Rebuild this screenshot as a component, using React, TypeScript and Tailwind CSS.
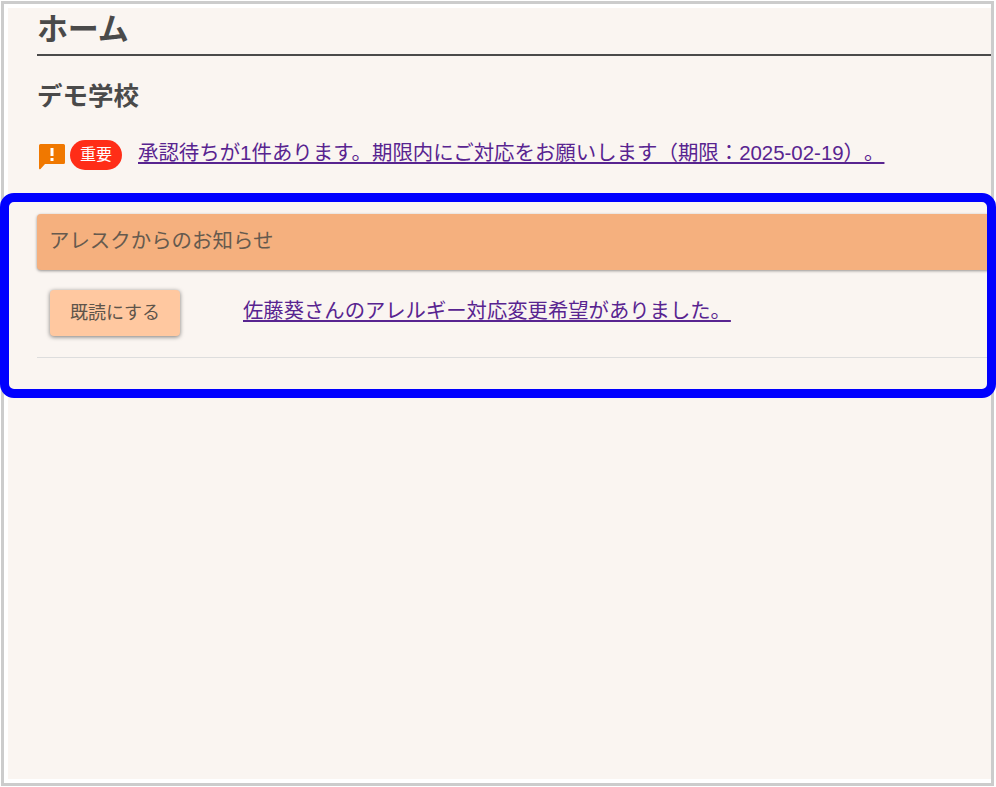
const font = "font-['Liberation_Sans','Noto_Sans_CJK_JP',sans-serif]";

export default function App() {
  return (
    <div className={`${font} relative w-[996px] h-[787px] bg-white overflow-hidden [text-spacing-trim:space-all]`}>
      {/* Frame */}
      <div className="ml-px mt-px w-[993px] h-[785px] border-[3px] border-[#cccccc] bg-white pl-[4px] pt-[4px] pb-[4px]">
        <main className="h-full bg-[#faf5f1] pl-[29px] text-[#4a4a4a]">
          <h1 className="h-[48px] border-b-2 border-[#4a4a4a] text-[31px] leading-[44px] font-bold -tracking-[0.2px]">ホーム</h1>
          <h2 className="mt-[24px] text-[25.500px] leading-[32px] font-bold">デモ学校</h2>

          {/* Alert */}
          <div className="mt-[28px] flex items-start">
            <svg className="ml-[2px] mt-[4px] w-[26px] h-[26px]" viewBox="0 0 26 26">
              <path d="M1.500 0H24.500Q26 0 26 1.500V18.500Q26 20 24.500 20H6L1.500 25Q0 26 0 24V1.500Q0 0 1.500 0Z" fill="#f07800" />
              <rect x="11.500" y="4" width="3" height="8" fill="#ffffff" />
              <rect x="11.500" y="14" width="3" height="3" fill="#ffffff" />
            </svg>
            <span className="ml-[5px] w-[52px] h-[30px] rounded-full bg-[#ff2d17] text-white text-[16px] leading-[29px] text-center">重要</span>
            <a href="#" className="ml-[16px] text-[20.430px] leading-[26px] text-[#582490] underline">
              承認待ちが1件あります。期限内にご対応をお願いします（期限：2025-02-19）。
            </a>
          </div>

          {/* Notices */}
          <section className="mt-[44px]">
            <div className="h-[56px] rounded-[4px] bg-[#f5b07e] pl-[12px] text-[20.450px] leading-[54px] text-[#665a4e] shadow-[0_1px_3px_rgba(0,0,0,0.4)]">
              アレスクからのお知らせ
            </div>
            <div className="h-[88px] flex items-start border-b border-[#dddddd]">
              <button className="mt-[20px] ml-[13px] w-[130px] h-[46px] rounded-[4px] bg-[#ffc8a0] text-[18px] text-[#5e544a] shadow-[0_1px_4px_rgba(0,0,0,0.5)]">
                既読にする
              </button>
              <a href="#" className="mt-[28px] ml-[63px] text-[20.330px] leading-[26px] text-[#582490] underline">
                佐藤葵さんのアレルギー対応変更希望がありました。
              </a>
            </div>
          </section>
        </main>
      </div>

      {/* Blue highlight over the notices */}
      <div className="absolute left-0 top-[193px] w-[996px] h-[205px] rounded-[14px] border-[9px] border-[#0000ff]" />
    </div>
  );
}
